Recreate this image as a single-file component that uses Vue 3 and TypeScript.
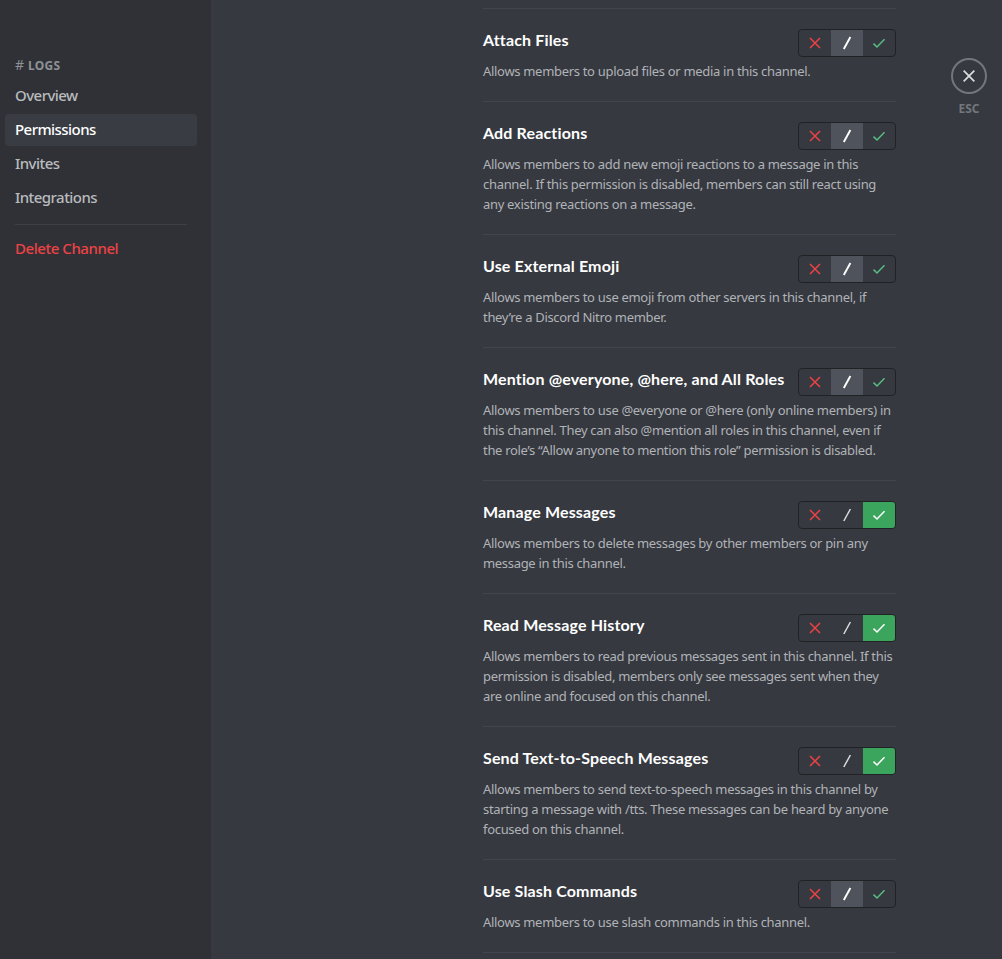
<script setup lang="ts">
type State = 'deny' | 'inherit' | 'allow'

interface Permission {
  name: string
  lines: string[]
  state: State
}

const navItems: string[] = ['Overview', 'Permissions', 'Invites', 'Integrations']
const activeItem = 'Permissions'

const permissions: Permission[] = [
  {
    name: 'Attach Files',
    lines: ['Allows members to upload files or media in this channel.'],
    state: 'inherit',
  },
  {
    name: 'Add Reactions',
    lines: [
      'Allows members to add new emoji reactions to a message in this',
      'channel. If this permission is disabled, members can still react using',
      'any existing reactions on a message.',
    ],
    state: 'inherit',
  },
  {
    name: 'Use External Emoji',
    lines: [
      'Allows members to use emoji from other servers in this channel, if',
      'they’re a Discord Nitro member.',
    ],
    state: 'inherit',
  },
  {
    name: 'Mention @everyone, @here, and All Roles',
    lines: [
      'Allows members to use @everyone or @here (only online members) in',
      'this channel. They can also @mention all roles in this channel, even if',
      'the role’s “Allow anyone to mention this role” permission is disabled.',
    ],
    state: 'inherit',
  },
  {
    name: 'Manage Messages',
    lines: [
      'Allows members to delete messages by other members or pin any',
      'message in this channel.',
    ],
    state: 'allow',
  },
  {
    name: 'Read Message History',
    lines: [
      'Allows members to read previous messages sent in this channel. If this',
      'permission is disabled, members only see messages sent when they',
      'are online and focused on this channel.',
    ],
    state: 'allow',
  },
  {
    name: 'Send Text-to-Speech Messages',
    lines: [
      'Allows members to send text-to-speech messages in this channel by',
      'starting a message with /tts. These messages can be heard by anyone',
      'focused on this channel.',
    ],
    state: 'allow',
  },
  {
    name: 'Use Slash Commands',
    lines: ['Allows members to use slash commands in this channel.'],
    state: 'inherit',
  },
]
</script>

<template>
  <div class="page">
    <aside class="sidebar">
      <div class="heading"><span class="hash">#</span> LOGS</div>
      <nav class="nav">
        <a v-for="item in navItems" :key="item" class="item" :class="{ active: item === activeItem }">{{ item }}</a>
        <div class="separator"></div>
        <a class="item danger">Delete Channel</a>
      </nav>
    </aside>

    <main class="content">
      <section v-for="perm in permissions" :key="perm.name" class="perm">
        <div class="head">
          <h3 class="title">{{ perm.name }}</h3>
          <div class="toggle">
            <button class="seg deny" :class="{ on: perm.state === 'deny' }" aria-label="Deny">
              <svg width="16" height="16" viewBox="0 0 16 16"><path d="M3 3L13 13M13 3L3 13" /></svg>
            </button>
            <button class="seg inherit" :class="{ on: perm.state === 'inherit' }" aria-label="Inherit">
              <svg width="16" height="16" viewBox="0 0 16 16"><path d="M4.8 14L11.4 2" /></svg>
            </button>
            <button class="seg allow" :class="{ on: perm.state === 'allow' }" aria-label="Allow">
              <svg width="16" height="16" viewBox="0 0 16 16"><path d="M2.5 8.6L6 12L13.5 4.3" /></svg>
            </button>
          </div>
        </div>
        <p class="desc">
          <span v-for="line in perm.lines" :key="line" class="line">{{ line }}</span>
        </p>
      </section>
    </main>

    <div class="close">
      <button class="ring" aria-label="Close">
        <svg width="18" height="18" viewBox="0 0 18 18"><path d="M3.7 3.7L14.3 14.3M14.3 3.7L3.7 14.3" /></svg>
      </button>
      <span class="esc">ESC</span>
    </div>
  </div>
</template>

<style>
body {
  background: #36393f;
  overflow: hidden;
}
</style>

<style scoped>
.page {
  display: flex;
  height: 959px;
  overflow: hidden;
  background: #36393f;
  font-family: "Noto Sans", "Open Sans", sans-serif;
}
.sidebar {
  box-sizing: border-box;
  flex: 0 0 211px;
  padding: 56px 14px 0 5px;
  background: #2f3136;
}
.heading {
  height: 18px;
  padding-left: 10px;
  font-size: 12px;
  line-height: 18px;
  font-weight: 700;
  letter-spacing: 0.35px;
  color: #8e9297;
}
.hash {
  font-size: 14px;
  font-weight: 400;
}
.nav {
  display: flex;
  flex-direction: column;
  gap: 2px;
  padding-top: 6px;
}
.item {
  padding: 5px 10px 7px;
  border-radius: 4px;
  font-size: 15px;
  line-height: 20px;
  font-weight: 500;
  letter-spacing: -0.55px;
  color: #b9bbbe;
}
.active {
  background: #393c43;
  color: #fff;
}
.danger {
  letter-spacing: -0.45px;
  color: #ed4245;
}
.separator {
  height: 1px;
  margin: 8px 10px 6px;
  background: #3c3f45;
}
.content {
  flex: 0 0 413px;
  min-width: 0;
  margin-left: 272px;
  padding-top: 8px;
}
.perm {
  box-sizing: border-box;
  padding: 20px 0;
  border-top: 1px solid #42454b;
}
.perm:last-child {
  border-bottom: 1px solid #42454b;
}
.head {
  display: flex;
  justify-content: space-between;
  height: 24px;
  margin-bottom: 8px;
}
.title {
  margin: 0;
  font-family: Lato, sans-serif;
  font-size: 16px;
  line-height: 22px;
  font-weight: 700;
  letter-spacing: 0.15px;
  white-space: nowrap;
  color: #fff;
}
.toggle {
  box-sizing: border-box;
  display: flex;
  flex: none;
  width: 98px;
  height: 28px;
  border: 1px solid #202225;
  border-radius: 4px;
  overflow: hidden;
}
.seg {
  display: flex;
  align-items: center;
  justify-content: center;
  flex: 1;
  padding: 0;
  border: 0;
  background: transparent;
}
.seg path,
.ring path {
  fill: none;
  stroke: currentColor;
  stroke-width: 1.5;
}
.deny {
  color: #ed4245;
}
.inherit {
  color: #dcddde;
}
.inherit.on {
  background: #4f545c;
  color: #fff;
}
.inherit.on path {
  stroke-width: 1.9;
}
.allow {
  color: #57bd82;
}
.allow.on {
  background: #3ba55d;
  color: #fff;
}
.desc {
  margin: 0;
  font-size: 13px;
  line-height: 20px;
  letter-spacing: -0.31px;
  color: #b0b3b8;
}
.line {
  display: block;
  white-space: nowrap;
}
.close {
  display: flex;
  flex-direction: column;
  align-items: center;
  width: 36px;
  margin: 58px 0 0 55px;
}
.ring {
  box-sizing: border-box;
  display: flex;
  align-items: center;
  justify-content: center;
  width: 36px;
  height: 36px;
  padding: 0;
  border: 2px solid #72767d;
  border-radius: 50%;
  background: transparent;
  color: #dcddde;
}
.ring path {
  stroke-width: 1.7;
}
.esc {
  margin-top: 6px;
  font-size: 12px;
  line-height: 18px;
  font-weight: 700;
  color: #72767d;
}
</style>
